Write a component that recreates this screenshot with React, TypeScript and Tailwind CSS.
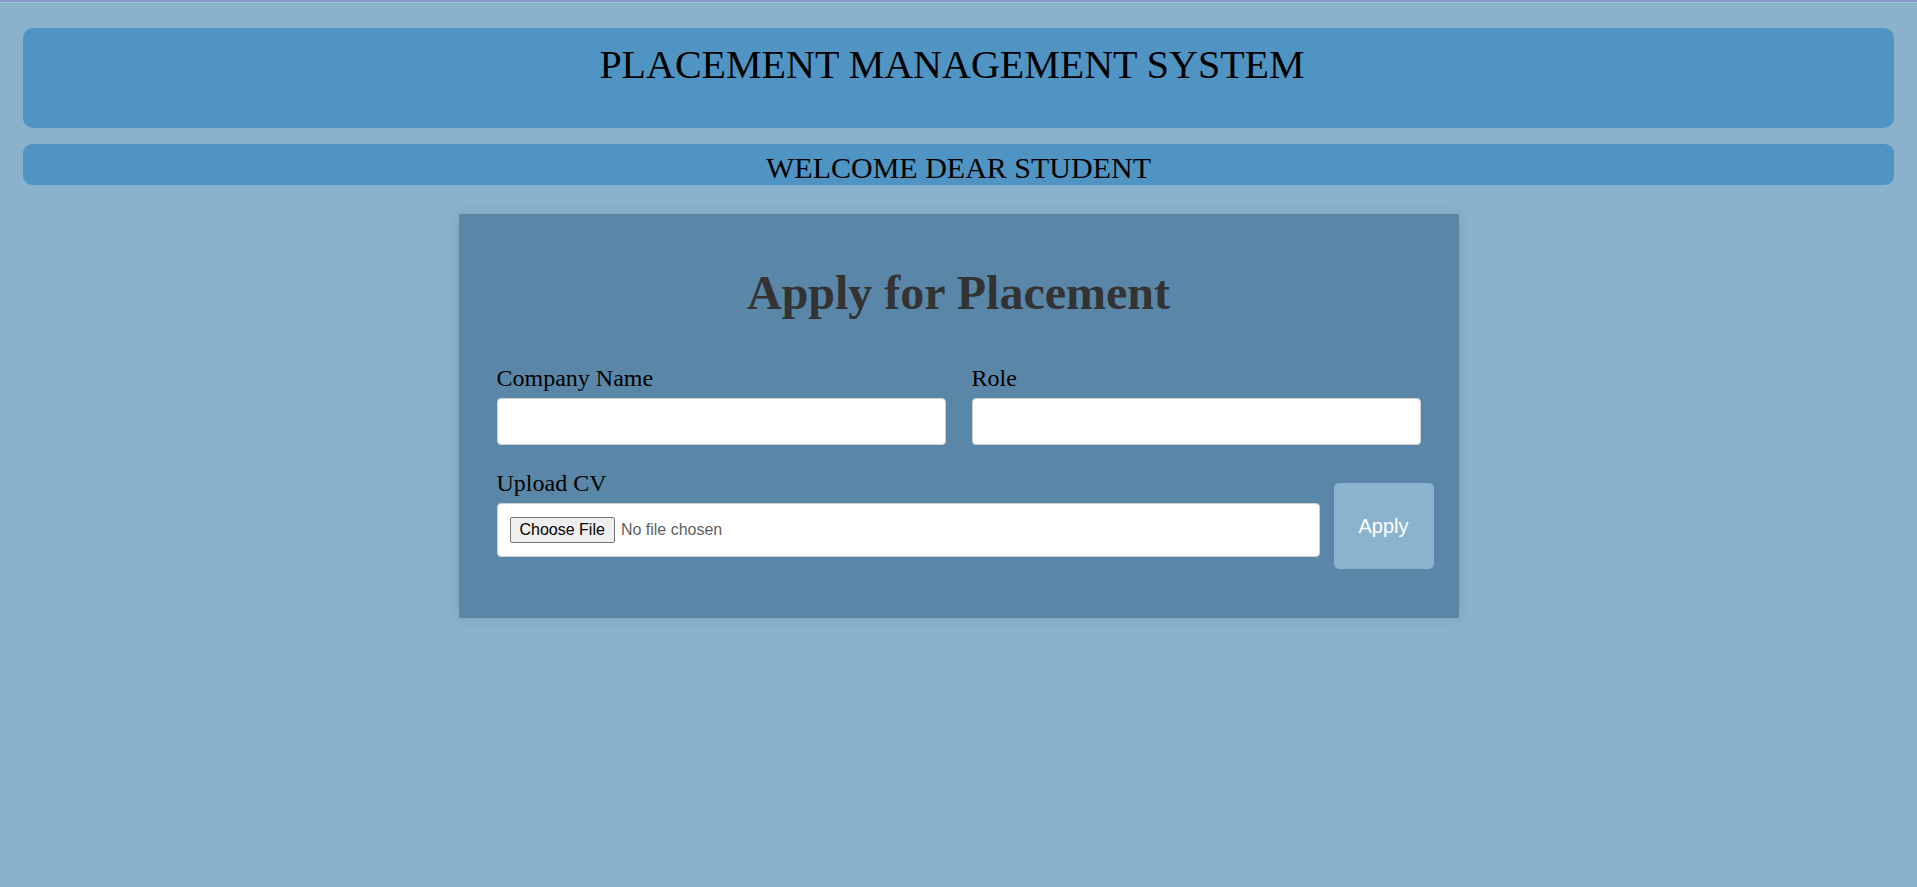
import React from 'react';

const labelCls = 'block text-[24px] leading-[28px] text-black mb-[6px]';
const inputCls =
  'w-full h-[47px] bg-white border border-[#cfcfcf] rounded-[4px] px-[10px] text-[16px] outline-none';

const App: React.FC = () => {
  return (
    <div className="min-h-screen bg-[#8ab2cd] font-['Liberation_Serif','Times_New_Roman',serif]">
      <div className="h-[2px] bg-[#8b9bd0]" />
      <div className="h-[1px] bg-[#9fc1c9]" />

      <header className="mx-[23px] mt-[25px] h-[100px] rounded-[10px] bg-[#4f94c3] pt-[14px] pr-[13px] text-center">
        <h1 className="text-[40px] leading-[46px] text-black">PLACEMENT MANAGEMENT SYSTEM</h1>
      </header>

      <div className="mx-[23px] mt-[16px] h-[41px] rounded-[9px] bg-[#4f94c3] pt-[7px] text-center">
        <h2 className="text-[30px] leading-[33px] text-black">WELCOME DEAR STUDENT</h2>
      </div>

      <main className="mx-auto mt-[29px] w-[1000px] bg-[#5a87a8] px-[38px] pt-[51px] pb-[49px] shadow-[0_0_10px_rgba(0,0,0,0.12)]">
        <h2 className="text-center text-[48px] font-bold leading-[55px] text-[#333333]">
          Apply for Placement
        </h2>

        <form className="mt-[44px]" onSubmit={(e) => e.preventDefault()}>
          <div className="grid grid-cols-2 gap-x-[26px]">
            <div>
              <label className={labelCls}>Company Name</label>
              <input type="text" className={inputCls} />
            </div>
            <div>
              <label className={labelCls}>Role</label>
              <input type="text" className={inputCls} />
            </div>
          </div>

          <div className="mt-[24px] mr-[-13px] flex items-start gap-[14px]">
            <div className="flex-1">
              <label className={labelCls}>Upload CV</label>
              <input
                type="file"
                className="block w-full bg-white border border-[#cfcfcf] rounded-[4px] px-[12px] py-[13px] font-['Liberation_Sans',Arial,sans-serif] text-[16px] leading-[18px] text-[#5f5f5f] file:mr-[6px] file:rounded-[2px] file:border file:border-[#767676] file:bg-[#efefef] file:px-[9px] file:py-[3px] file:text-[16px] file:leading-[18px] file:text-black"
              />
            </div>
            <button
              type="submit"
              className="mt-[14px] h-[86px] w-[100px] rounded-[5px] bg-[#8bb3cd] font-['Liberation_Sans',Arial,sans-serif] text-[20px] text-white"
            >
              Apply
            </button>
          </div>
        </form>
      </main>
    </div>
  );
};

export default App;
